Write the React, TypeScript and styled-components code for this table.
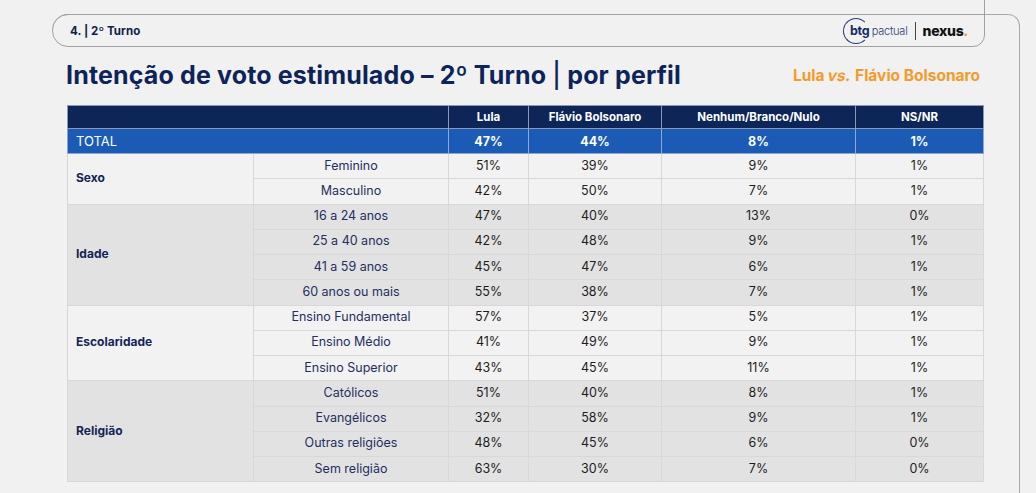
import React from 'react'
import styled, { createGlobalStyle } from 'styled-components'

const GlobalStyle = createGlobalStyle`
    html, body {
        margin: 0;
        padding: 0;
        background: #f1f1f1;
        font-family: Inter, "Noto Sans", sans-serif;
        overflow: hidden;
    }
`

const Page = styled.div`
    width: 1036px;
    height: 493px;
    box-sizing: border-box;
    padding: 14px 0 0 52px;
`

const Frame = styled.div`
    width: 968px;
    height: 479px;
    box-sizing: border-box;
    border-top: 1px solid #a8a8a8;
    border-right: 1px solid #a8a8a8;
    border-radius: 16px 12px 0 0;
`

const Tab = styled.div`
    position: relative;
    width: 933px;
    height: 33px;
    margin-top: -1px;
    box-sizing: border-box;
    border: 1px solid #a0a0a0;
    border-radius: 16px 0 12px 16px;
    display: flex;
    align-items: center;
    justify-content: space-between;
    padding: 0 16px 0 17px;

    &::after {
        content: '';
        position: absolute;
        right: -1px;
        bottom: 100%;
        height: 15px;
        border-right: 1px solid #a0a0a0;
    }
`

const Crumb = styled.span`
    font-size: 11.5px;
    font-weight: 700;
    color: #0f1f4d;
    letter-spacing: 0.1px;
`

const Logo = styled.div`
    display: flex;
    align-items: center;
    gap: 4px;
`

const BtgMark = styled.span`
    display: inline-flex;
    align-items: center;
    justify-content: center;
    width: 26px;
    height: 26px;
    box-sizing: border-box;
    border: 1px solid #2b3a78;
    border-right-color: transparent;
    border-radius: 50%;
    font-size: 12.5px;
    font-weight: 700;
    color: #152a66;
    letter-spacing: -0.3px;
    padding-left: 8px;
`

const Pactual = styled.span`
    font-size: 11px;
    font-weight: 300;
    color: #2b3a78;
    margin-left: -1px;
    letter-spacing: -0.2px;
`

const Divider = styled.span`
    width: 1px;
    height: 18px;
    background: #444;
    margin: 0 3px;
`

const Nexus = styled.span`
    font-size: 14px;
    font-weight: 800;
    color: #111;
    letter-spacing: -0.3px;

    em {
        font-style: normal;
        color: #f39a2b;
    }
`

const TitleRow = styled.div`
    display: flex;
    align-items: center;
    justify-content: space-between;
    padding: 0 39px 0 14px;
    margin-top: 13px;
`

const Title = styled.h1`
    margin: 0;
    font-size: 25px;
    font-weight: 700;
    color: #0d2459;
    letter-spacing: 0.15px;
    line-height: 30px;
`

const Pipe = styled.span`
    font-weight: 500;
`

const Subtitle = styled.span`
    font-size: 15.5px;
    font-weight: 700;
    color: #f39a2b;

    i {
        display: inline-block;
        font-style: normal;
        transform: skewX(-12deg);
    }
`

const Table = styled.table`
    margin: 15px 0 0 15px;
    width: 916px;
    border-collapse: collapse;
    table-layout: fixed;
    font-size: 12.5px;
`

const HeadCell = styled.th`
    background: #0d2657;
    color: #fff;
    font-size: 11.5px;
    font-weight: 700;
    height: 22px;
    padding: 0;
    border: 1px solid #8c97b0;
`

const TotalCell = styled.td<{ $label?: boolean }>`
    background: #1c5bb5;
    color: #fff;
    height: 24px;
    padding: 0 0 0 ${p => (p.$label ? '8px' : '0')};
    text-align: ${p => (p.$label ? 'left' : 'center')};
    font-weight: ${p => (p.$label ? 400 : 700)};
    font-size: ${p => (p.$label ? '13px' : '12.5px')};
    border: 1px solid #8fa6d0;
`

const GroupCell = styled.td<{ $shade: boolean }>`
    background: ${p => (p.$shade ? '#e2e2e2' : '#f2f2f2')};
    color: #132556;
    font-weight: 700;
    font-size: 12px;
    padding: 0 0 2px 8px;
    border: 1px solid #d8d8d8;
`

const SubCell = styled.td<{ $shade: boolean }>`
    background: ${p => (p.$shade ? '#e2e2e2' : '#f2f2f2')};
    color: #1f2f60;
    text-align: center;
    height: 22.25px;
    padding: 0 0 2px;
    border: 1px solid #d8d8d8;
`

const ValueCell = styled.td<{ $shade: boolean }>`
    background: ${p => (p.$shade ? '#e2e2e2' : '#f2f2f2')};
    color: #1d1d1d;
    text-align: center;
    padding: 0 0 2px;
    border: 1px solid #d8d8d8;
`

type Row = { label: string; values: string[] }
type Group = { name: string; rows: Row[] }

const groups: Group[] = [
    {
        name: 'Sexo',
        rows: [
            { label: 'Feminino', values: ['51%', '39%', '9%', '1%'] },
            { label: 'Masculino', values: ['42%', '50%', '7%', '1%'] },
        ],
    },
    {
        name: 'Idade',
        rows: [
            { label: '16 a 24 anos', values: ['47%', '40%', '13%', '0%'] },
            { label: '25 a 40 anos', values: ['42%', '48%', '9%', '1%'] },
            { label: '41 a 59 anos', values: ['45%', '47%', '6%', '1%'] },
            { label: '60 anos ou mais', values: ['55%', '38%', '7%', '1%'] },
        ],
    },
    {
        name: 'Escolaridade',
        rows: [
            { label: 'Ensino Fundamental', values: ['57%', '37%', '5%', '1%'] },
            { label: 'Ensino Médio', values: ['41%', '49%', '9%', '1%'] },
            { label: 'Ensino Superior', values: ['43%', '45%', '11%', '1%'] },
        ],
    },
    {
        name: 'Religião',
        rows: [
            { label: 'Católicos', values: ['51%', '40%', '8%', '1%'] },
            { label: 'Evangélicos', values: ['32%', '58%', '9%', '1%'] },
            { label: 'Outras religiões', values: ['48%', '45%', '6%', '0%'] },
            { label: 'Sem religião', values: ['63%', '30%', '7%', '0%'] },
        ],
    },
]

const columns = ['Lula', 'Flávio Bolsonaro', 'Nenhum/Branco/Nulo', 'NS/NR']
const totals = ['47%', '44%', '8%', '1%']
const widths = [186, 195, 80, 133, 194, 128]

const App = () => {
    return (
        <Page>
            <GlobalStyle />
            <Frame>
                <Tab>
                    <Crumb>4. | 2º Turno</Crumb>
                    <Logo>
                        <BtgMark>btg</BtgMark>
                        <Pactual>pactual</Pactual>
                        <Divider />
                        <Nexus>
                            nexus<em>.</em>
                        </Nexus>
                    </Logo>
                </Tab>
                <TitleRow>
                    <Title>
                        Intenção de voto estimulado – 2º Turno <Pipe>|</Pipe> por perfil
                    </Title>
                    <Subtitle>
                        Lula <i>vs.</i> Flávio Bolsonaro
                    </Subtitle>
                </TitleRow>
                <Table>
                    <colgroup>
                        {widths.map((w, i) => (
                            <col key={i} style={{ width: w }} />
                        ))}
                    </colgroup>
                    <thead>
                        <tr>
                            <HeadCell colSpan={2} />
                            {columns.map(c => (
                                <HeadCell key={c}>{c}</HeadCell>
                            ))}
                        </tr>
                    </thead>
                    <tbody>
                        <tr>
                            <TotalCell colSpan={2} $label>
                                TOTAL
                            </TotalCell>
                            {totals.map((t, i) => (
                                <TotalCell key={i}>{t}</TotalCell>
                            ))}
                        </tr>
                        {groups.map((g, gi) => {
                            const shade = gi % 2 === 1
                            return g.rows.map((r, ri) => (
                                <tr key={g.name + r.label}>
                                    {ri === 0 && (
                                        <GroupCell rowSpan={g.rows.length} $shade={shade}>
                                            {g.name}
                                        </GroupCell>
                                    )}
                                    <SubCell $shade={shade}>{r.label}</SubCell>
                                    {r.values.map((v, vi) => (
                                        <ValueCell key={vi} $shade={shade}>
                                            {v}
                                        </ValueCell>
                                    ))}
                                </tr>
                            ))
                        })}
                    </tbody>
                </Table>
            </Frame>
        </Page>
    )
}

export default App
